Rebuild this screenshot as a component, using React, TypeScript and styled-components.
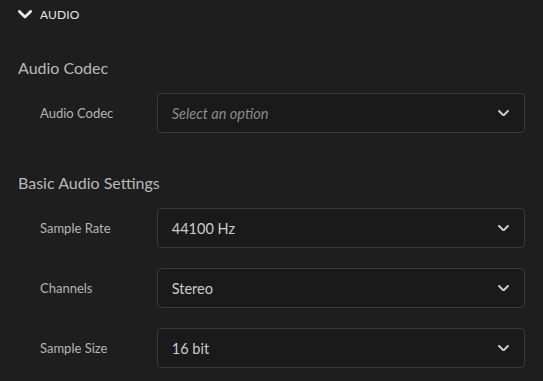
import React from 'react';
import styled, {createGlobalStyle} from "styled-components";

const GlobalStyle = createGlobalStyle`
  html, body {
    margin: 0;
    padding: 0;
    background: #1e1e1e;
  }
  body {
    font-family: Lato, "Open Sans", "Liberation Sans", sans-serif;
  }
`

type RowType = {
    label: string
    value?: string
    placeholder?: string
}

const sections: { title: string, rows: RowType[] }[] = [
    {title: 'Audio Codec', rows: [{label: 'Audio Codec', placeholder: 'Select an option'}]},
    {
        title: 'Basic Audio Settings', rows: [
            {label: 'Sample Rate', value: '44100 Hz'},
            {label: 'Channels', value: 'Stereo'},
            {label: 'Sample Size', value: '16 bit'},
        ]
    },
]

const Chevron = ({size, stroke, color}: { size: number, stroke: number, color: string }) => (
    <svg width={size} height={size * 0.6} viewBox="0 0 10 6" fill="none">
        <path d="M1 1 L5 5 L9 1" stroke={color} strokeWidth={stroke} strokeLinecap="round" strokeLinejoin="round"/>
    </svg>
)

const App = () => {
    return (
        <Panel>
            <GlobalStyle/>
            <Header>
                <Chevron size={14} stroke={2} color="#e8e8e8"/>
                <HeaderText>AUDIO</HeaderText>
            </Header>
            {sections.map(s => (
                <Section key={s.title}>
                    <SectionTitle>{s.title}</SectionTitle>
                    <Rows>
                        {s.rows.map(r => (
                            <Row key={r.label}>
                                <Label>{r.label}</Label>
                                <Select>
                                    <Value $placeholder={!r.value}>{r.value ?? r.placeholder}</Value>
                                    <Chevron size={11} stroke={1.9} color="#c8c8c8"/>
                                </Select>
                            </Row>
                        ))}
                    </Rows>
                </Section>
            ))}
        </Panel>
    );
};

export default App;

const Panel = styled.div`
  width: 543px;
  height: 381px;
  overflow: hidden;
  background: #1e1e1e;
  display: flex;
  flex-direction: column;
  padding: 0 18px;
  box-sizing: border-box;
`

const Header = styled.div`
  height: 29px;
  display: flex;
  align-items: center;
  gap: 8px;
`

const HeaderText = styled.span`
  color: #e6e6e6;
  font-size: 12px;
  letter-spacing: 0.1px;
`

const Section = styled.div`
  display: flex;
  flex-direction: column;
  margin-top: 27px;

  & + & {
    margin-top: 38px;
  }
`

const SectionTitle = styled.div`
  height: 24px;
  line-height: 24px;
  font-size: 16px;
  color: #b9b9b9;
  margin-bottom: 13px;
`

const Rows = styled.div`
  display: flex;
  flex-direction: column;
  gap: 20px;
`

const Row = styled.div`
  display: flex;
  align-items: center;
  height: 40px;
`

const Label = styled.span`
  width: 117px;
  padding-left: 22px;
  font-size: 13px;
  color: #b4b4b4;
`

const Select = styled.div`
  width: 369px;
  height: 40px;
  box-sizing: border-box;
  border: 1px solid #3a3a3a;
  border-radius: 4px;
  background: #1a1a1a;
  display: flex;
  align-items: center;
  justify-content: space-between;
  padding: 0 15px 0 14px;
`

const Value = styled.span<{ $placeholder: boolean }>`
  font-size: 14.5px;
  color: ${p => p.$placeholder ? '#8c8c8c' : '#cccccc'};
  font-style: ${p => p.$placeholder ? 'italic' : 'normal'};
`
